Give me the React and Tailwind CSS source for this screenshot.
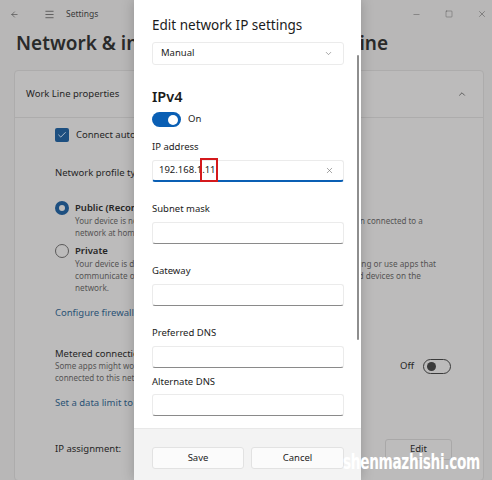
import { X, ChevronDown, ChevronUp, ArrowLeft, Menu, Minus, Square, Check } from 'lucide-react';

const font = { fontFamily: '"Segoe UI", "Noto Sans", "Open Sans", sans-serif' };

const Field = ({ label, children, active, top = 'mt-[20px]', gap = 'mt-[6px]' }) => (
  <div className={top}>
    <div className="text-[9.5px] text-[#1b1b1b] leading-[14px]">{label}</div>
    <div
      className={`${gap} h-[22px] w-[192px] rounded-[3px] border border-[#ebebeb] ${
        active ? 'border-b-2 border-b-[#0a5fb4]' : 'border-b-[#8a8a8a]'
      } flex items-center pl-[6px] pr-[9px]`}
    >
      {children}
    </div>
  </div>
);

const EditDialog = () => (
  <div className="absolute left-[134px] top-0 w-[227px] h-[480px] bg-white shadow-[0_0_12px_rgba(0,0,0,0.22)]">
    <div className="pl-[18px] pt-[15px]">
      <div className="text-[13.5px] text-[#1b1b1b] leading-[20px]">Edit network IP settings</div>
      <div className="mt-[7px] h-[23px] w-[192px] rounded-[3px] border border-[#ebebeb] flex items-center justify-between pl-[8px] pr-[10px]">
        <span className="text-[9.5px] text-[#1b1b1b]">Manual</span>
        <ChevronDown size={9} strokeWidth={1.5} className="text-[#666]" />
      </div>

      <div className="mt-[21px] text-[14.5px] font-semibold text-[#1b1b1b] leading-[20px]">IPv4</div>
      <div className="mt-[6px] flex items-center gap-[7px]">
        <div className="w-[29px] h-[15px] rounded-full bg-[#0a5fb4] flex items-center justify-end pr-[3px]">
          <div className="w-[10px] h-[10px] rounded-full bg-white" />
        </div>
        <span className="text-[9.5px] text-[#1b1b1b]">On</span>
      </div>

      <Field label="IP address" active top="mt-[13px]">
        <div className="flex-1 flex items-center text-[9.5px] text-[#1b1b1b]">
          <span>192.168.1.</span>
          <span className="relative">
            11
            <span className="absolute -left-[5px] -top-[5px] w-[18px] h-[24px] border-2 border-[#d4191c]" />
          </span>
          <span className="w-px h-[12px] bg-[#1b1b1b] ml-[1px]" />
        </div>
        <X size={9} strokeWidth={1.5} className="text-[#666]" />
      </Field>
      <Field label="Subnet mask" />
      <Field label="Gateway" />
      <Field label="Preferred DNS" />
      <Field label="Alternate DNS" top="mt-[7px]" gap="mt-[5px]" />
    </div>

    <div className="absolute left-[223px] top-[55px] w-[2px] h-[285px] bg-[#8e8e8e] rounded-full" />

    <div className="absolute left-0 bottom-0 w-full h-[52px] bg-[#f3f3f3] border-t border-[#e8e8e8] flex items-center gap-[7px] pl-[18px] pt-[7px]">
      <button className="w-[92px] h-[22px] rounded-[3px] bg-[#fbfbfb] border border-[#e2e2e2] text-[9.5px] text-[#1b1b1b]">Save</button>
      <button className="w-[93px] h-[22px] rounded-[3px] bg-[#fbfbfb] border border-[#e2e2e2] text-[9.5px] text-[#1b1b1b]">Cancel</button>
    </div>
  </div>
);

export default function App() {
  return (
    <div className="relative w-[492px] h-[480px] overflow-hidden bg-[#b8b7b7] text-[#262626]" style={font}>
      {/* title bar */}
      <div className="h-[28px] flex items-center pl-[10px]">
        <ArrowLeft size={9} strokeWidth={1.5} className="text-[#3a3a3a]" />
        <Menu size={11} strokeWidth={1.5} className="ml-[25px] text-[#3a3a3a]" />
        <span className="ml-[11px] text-[8.5px] text-[#3a3a3a]">Settings</span>
        <div className="ml-auto flex items-center gap-[24px] pr-[5px] text-[#4a4a4a]">
          <Minus size={9} strokeWidth={1.2} />
          <Square size={8} strokeWidth={1.2} />
          <X size={10} strokeWidth={1.2} />
        </div>
      </div>

      <div className="pl-[16px] mt-[1px] flex items-baseline text-[19px] font-semibold leading-[28px] text-[#2a2a2a] whitespace-nowrap">
        <span>Network &amp; internet</span>
        <span className="ml-[8px]">&gt;</span>
        <span className="ml-[8px]">Wi-Fi</span>
        <span className="ml-[8px]">&gt;</span>
        <span className="ml-[8px]">Work Line</span>
      </div>

      {/* card */}
      <div className="ml-[14px] mr-[8px] mt-[13px] border border-[#adacac] rounded-[4px] bg-[#bcbbbb]">
        <div className="h-[47px] flex items-center justify-between pl-[11px] pr-[16px] border-b border-[#adacac]">
          <span className="text-[9.5px]">Work Line properties</span>
          <ChevronUp size={10} strokeWidth={1.5} />
        </div>
        <div className="pl-[40px] pr-[14px] pt-[10px]">
          <div className="flex items-center gap-[7px] h-[14px]">
            <div className="w-[14px] h-[14px] rounded-[2px] bg-[#1d4f80] flex items-center justify-center">
              <Check size={10} strokeWidth={2} className="text-[#c9d3dc]" />
            </div>
            <span className="text-[9.5px]">Connect automatically when in range</span>
          </div>

          <div className="mt-[24px] text-[9.5px] leading-[14px]">Network profile type</div>

          <div className="mt-[21px] flex gap-[6px]">
            <div className="w-[14px] h-[14px] rounded-full bg-[#1d4f80] flex items-center justify-center shrink-0">
              <div className="w-[6px] h-[6px] rounded-full bg-[#bcbbbb]" />
            </div>
            <div className="text-[8px] leading-[12px] text-[#555454] whitespace-nowrap">
              <div className="text-[9.5px] leading-[14px] font-semibold text-[#262626]">Public (Recommended)</div>
              <div>Your device is not discoverable on the network. Use this in most cases—when connected to a</div>
              <div>network at home, work, or in a public place.</div>
            </div>
          </div>

          <div className="mt-[5px] flex gap-[6px]">
            <div className="w-[14px] h-[14px] rounded-full border border-[#5a5959] shrink-0" />
            <div className="text-[8.2px] leading-[12px] text-[#555454] whitespace-nowrap">
              <div className="text-[9.5px] leading-[14px] font-semibold text-[#262626]">Private</div>
              <div>Your device is discoverable on the network. Select this if you need file sharing or use apps that</div>
              <div>communicate over this network. You should know and trust the people and devices on the</div>
              <div>network.</div>
            </div>
          </div>

          <div className="mt-[12px] text-[9.5px] leading-[14px] text-[#2a5275]">Configure firewall and security settings</div>

          <div className="mt-[28px] flex items-center justify-between">
            <div className="text-[8px] leading-[12px] text-[#555454]">
              <div className="text-[9.5px] leading-[12px] text-[#262626]">Metered connection</div>
              <div>Some apps might work differently to reduce data usage when</div>
              <div>connected to this network</div>
            </div>
            <div className="flex items-center gap-[9px] mr-[18px]">
              <span className="text-[9.5px]">Off</span>
              <div className="w-[28px] h-[15px] rounded-full border border-[#3a3a3a] flex items-center pl-[3px]">
                <div className="w-[9px] h-[9px] rounded-full bg-[#3a3a3a]" />
              </div>
            </div>
          </div>

          <div className="mt-[12px] text-[9.5px] leading-[14px] text-[#2a5275]">Set a data limit to help control data usage on this network</div>

          <div className="mt-[29px] pb-[20px] flex items-center justify-between">
            <span className="text-[9.5px]">IP assignment:</span>
            <div className="mr-[17px] w-[67px] h-[21px] rounded-[3px] border border-[#a9a8a8] bg-[#bdbcbc] flex items-center justify-center text-[9.5px]">Edit</div>
          </div>
        </div>
      </div>

      <EditDialog />

      <div className="absolute left-[343px] top-[449px] origin-left scale-x-[0.62] text-[22px] font-bold text-white leading-[26px] tracking-[-0.5px] whitespace-nowrap" style={{ fontFamily: '"DejaVu Sans", sans-serif' }}>
        shenmazhishi.com
      </div>
    </div>
  );
}
